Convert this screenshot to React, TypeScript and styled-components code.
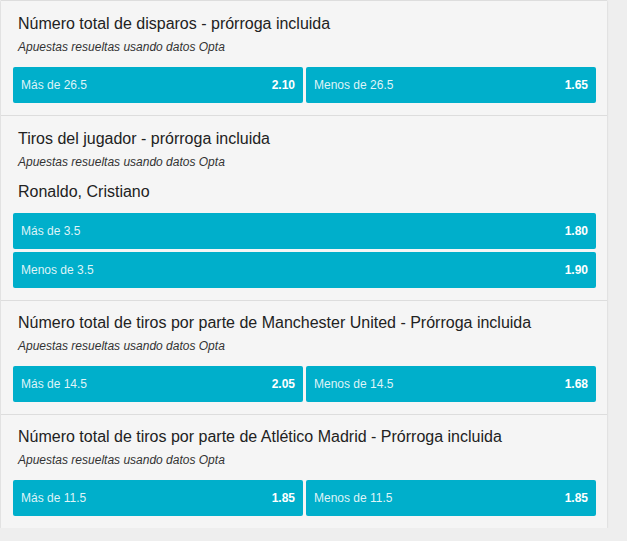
import React from "react";
import styled, { createGlobalStyle } from "styled-components";

const Global = createGlobalStyle`
  html, body { margin: 0; padding: 0; background: #eeeeee; }
  body { font-family: "Liberation Sans", Arial, sans-serif; }
`;

const Panel = styled.div`
  width: 606px;
  margin-left: 1px;
  background: #f5f5f5;
  border-top: 1px solid #dddddd;
  box-shadow: 0 1px 2px rgba(0, 0, 0, 0.15);
`;

const Section = styled.section<{ $top: number }>`
  padding: ${(p) => p.$top}px 11px 12px 12px;
  border-bottom: 1px solid #dddddd;
  &:last-child { border-bottom: none; }
`;

const Title = styled.div`
  font-size: 16px;
  line-height: 20px;
  color: #222222;
  padding-left: 5px;
`;

const Sub = styled.div`
  margin-top: 5px;
  font-size: 12px;
  line-height: 16px;
  font-style: italic;
  color: #333333;
  padding-left: 5px;
`;

const Player = styled.div`
  margin-top: 12px;
  font-size: 16px;
  line-height: 20px;
  color: #222222;
  padding-left: 5px;
`;

const Grid = styled.div<{ $cols: number; $gap: number }>`
  margin-top: ${(p) => p.$gap}px;
  display: grid;
  grid-template-columns: repeat(${(p) => p.$cols}, 1fr);
  gap: 3px;
`;

const Btn = styled.div`
  height: 36px;
  background: #00afcb;
  border-radius: 2px;
  display: flex;
  align-items: center;
  justify-content: space-between;
  padding: 0 8px;
  font-size: 12px;
`;

const Label = styled.span`
  color: rgba(255, 255, 255, 0.88);
`;

const Odds = styled.span`
  color: #ffffff;
  font-weight: bold;
`;

type Sel = { label: string; odds: string };
type Market = { title: string; player?: string; cols: number; top: number; sels: Sel[] };

const markets: Market[] = [
  {
    title: "Número total de disparos - prórroga incluida",
    cols: 2,
    top: 13,
    sels: [
      { label: "Más de 26.5", odds: "2.10" },
      { label: "Menos de 26.5", odds: "1.65" },
    ],
  },
  {
    title: "Tiros del jugador - prórroga incluida",
    player: "Ronaldo, Cristiano",
    cols: 1,
    top: 13,
    sels: [
      { label: "Más de 3.5", odds: "1.80" },
      { label: "Menos de 3.5", odds: "1.90" },
    ],
  },
  {
    title: "Número total de tiros por parte de Manchester United - Prórroga incluida",
    cols: 2,
    top: 12,
    sels: [
      { label: "Más de 14.5", odds: "2.05" },
      { label: "Menos de 14.5", odds: "1.68" },
    ],
  },
  {
    title: "Número total de tiros por parte de Atlético Madrid - Prórroga incluida",
    cols: 2,
    top: 12,
    sels: [
      { label: "Más de 11.5", odds: "1.85" },
      { label: "Menos de 11.5", odds: "1.85" },
    ],
  },
];

export default function App() {
  return (
    <>
      <Global />
      <Panel>
        {markets.map((m) => (
          <Section key={m.title} $top={m.top}>
            <Title>{m.title}</Title>
            <Sub>Apuestas resueltas usando datos Opta</Sub>
            {m.player && <Player>{m.player}</Player>}
            <Grid $cols={m.cols} $gap={m.player ? 11 : 12}>
              {m.sels.map((s) => (
                <Btn key={s.label}>
                  <Label>{s.label}</Label>
                  <Odds>{s.odds}</Odds>
                </Btn>
              ))}
            </Grid>
          </Section>
        ))}
      </Panel>
    </>
  );
}
